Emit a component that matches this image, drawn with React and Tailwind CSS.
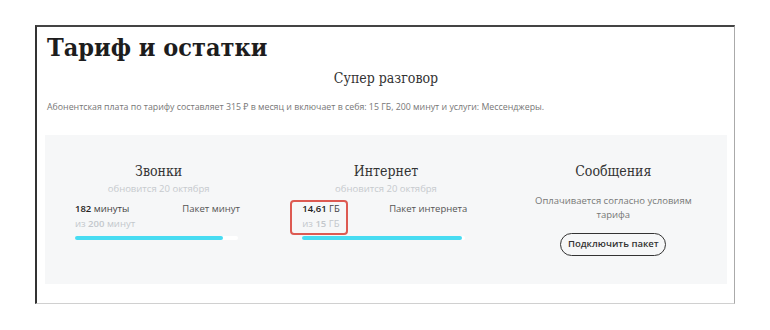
import React from 'react';

const serif = { fontFamily: '"DejaVu Serif Condensed", "DejaVu Serif", "Liberation Serif", serif' };

// Progress row for a counter column
function Usage({ value, unit, total, label, percent }) {
    return (
        <div className="ml-[30px] w-[165px]">
            <div className="flex justify-between text-[9.5px] leading-[15px] text-[#444]">
                <span>
                    <b className="font-semibold text-[#222]">{value}</b> {unit}
                </span>
                <span className="text-[#555]">{label}</span>
            </div>
            <div className="text-[9.5px] leading-[15px] text-[#c3c7cc]">
                из <b className="font-semibold">{total}</b> {unit === 'минуты' ? 'минут' : unit}
            </div>
            <div className="mt-[5px] h-[4px] w-[163px] rounded-full bg-white">
                <div className="h-full rounded-full bg-[#48dcf2]" style={{ width: `${percent}%` }} />
            </div>
        </div>
    );
}

export default function App() {
    return (
        <div className="w-[770px] h-[330px] bg-white pt-[25px] pl-[35px]" style={{ fontFamily: '"Open Sans", "Noto Sans", sans-serif' }}>
            <div className="w-[700px] h-[279px] border-l-2 border-t-2 border-l-[#333] border-t-[#444] border-r border-r-[#aaa] border-b border-b-[#d0d0d0] pl-[8px] pr-[7px]">
                {/* Header */}
                <h1 className="pt-[6px] pl-[2px] text-[25px] leading-[30px] font-bold text-[#1d1d1d]" style={serif}>
                    Тариф и остатки
                </h1>
                <div className="mt-[5px] text-center text-[14px] leading-[20px] text-[#333]" style={serif}>
                    Супер разговор
                </div>
                <p className="mt-[13px] pl-[2px] text-[8.8px] leading-[12px] text-[#777]">
                    Абонентская плата по тарифу составляет 315 ₽ в месяц и включает в себя: 15 ГБ, 200 минут и услуги: Мессенджеры.
                </p>

                {/* Counters */}
                <div className="mt-[22px] h-[149px] grid grid-cols-3 bg-[#f6f7f8]">
                    <div className="pt-[26px]">
                        <div className="text-center text-[14px] leading-[20px] text-[#333]" style={serif}>Звонки</div>
                        <div className="mt-[1px] text-center text-[9.5px] leading-[14px] text-[#c6cace]">обновится 20 октября</div>
                        <div className="mt-[5px]">
                            <Usage value="182" unit="минуты" total="200" label="Пакет минут" percent={91} />
                        </div>
                    </div>
                    <div className="relative pt-[26px]">
                        <div className="text-center text-[14px] leading-[20px] text-[#333]" style={serif}>Интернет</div>
                        <div className="mt-[1px] text-center text-[9.5px] leading-[14px] text-[#c6cace]">обновится 20 октября</div>
                        <div className="mt-[5px]">
                            <Usage value="14,61" unit="ГБ" total="15" label="Пакет интернета" percent={98} />
                        </div>
                        {/* highlight annotation */}
                        <div className="absolute left-[18px] top-[65px] w-[58px] h-[35px] rounded-[4px] border-2 border-[#dd5a52]" />
                    </div>
                    <div className="pt-[26px] flex flex-col items-center">
                        <div className="text-[14px] leading-[20px] text-[#333]" style={serif}>Сообщения</div>
                        <div className="mt-[13px] w-[160px] text-center text-[9.5px] leading-[14px] text-[#777]">
                            Оплачивается согласно условиям тарифа
                        </div>
                        <button className="mt-[11px] h-[23px] w-[106px] rounded-full border-[1.5px] border-[#333] text-[9.5px] font-semibold text-[#333]">
                            Подключить пакет
                        </button>
                    </div>
                </div>
            </div>
        </div>
    );
}
